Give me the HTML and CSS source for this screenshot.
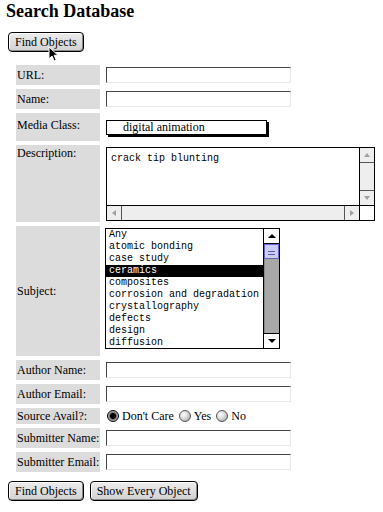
FILE: index.html
```html
<!DOCTYPE html>
<html lang="en">
<head>
    <meta charset="UTF-8">
    <title>Search Database</title>
    <link rel="stylesheet" href="styles.css">
</head>
<body>

    <h1 class="title">Search Database</h1>

    <form class="search">
        <div class="top-actions">
            <button type="submit" class="btn">Find Objects</button>
        </div>

        <div class="fields">
            <div class="label">URL:</div>
            <div class="value"><input type="text" class="text-input"></div>

            <div class="label">Name:</div>
            <div class="value"><input type="text" class="text-input"></div>

            <div class="label label-media">Media Class:</div>
            <div class="value value-top">
                <div class="popup">digital animation</div>
            </div>

            <div class="label label-top">Description:</div>
            <div class="value value-top">
                <!-- fake textarea with classic scrollbars -->
                <div class="textbox">
                    <div class="textbox-text">crack tip blunting</div>
                    <div class="vscroll">
                        <div class="sb-btn sb-up"></div>
                        <div class="sb-track"></div>
                        <div class="sb-btn sb-down"></div>
                    </div>
                    <div class="hscroll">
                        <div class="sb-btn sb-left"></div>
                        <div class="sb-track"></div>
                        <div class="sb-btn sb-right"></div>
                    </div>
                    <div class="corner"></div>
                </div>
            </div>

            <div class="label">Subject:</div>
            <div class="value value-top">
                <div class="listbox">
                    <ul class="list-items">
                        <li>Any</li>
                        <li>atomic bonding</li>
                        <li>case study</li>
                        <li class="selected">ceramics</li>
                        <li>composites</li>
                        <li>corrosion and degradation</li>
                        <li>crystallography</li>
                        <li>defects</li>
                        <li>design</li>
                        <li>diffusion</li>
                    </ul>
                    <div class="list-scroll">
                        <div class="ls-btn ls-up"></div>
                        <div class="ls-thumb"></div>
                        <div class="ls-track"></div>
                        <div class="ls-btn ls-down"></div>
                    </div>
                </div>
            </div>

            <div class="label">Author Name:</div>
            <div class="value"><input type="text" class="text-input"></div>

            <div class="label">Author Email:</div>
            <div class="value"><input type="text" class="text-input"></div>

            <div class="label">Source Avail?:</div>
            <div class="value radios">
                <label class="radio-opt"><span class="radio checked"></span>Don't Care</label>
                <label class="radio-opt"><span class="radio"></span>Yes</label>
                <label class="radio-opt"><span class="radio"></span>No</label>
            </div>

            <div class="label">Submitter Name:</div>
            <div class="value"><input type="text" class="text-input"></div>

            <div class="label">Submitter Email:</div>
            <div class="value"><input type="text" class="text-input"></div>
        </div>

        <div class="actions">
            <button type="submit" class="btn">Find Objects</button>
            <button type="button" class="btn">Show Every Object</button>
        </div>
    </form>

    <!-- mouse pointer over the top button -->
    <svg class="cursor" width="12" height="17" viewBox="0 0 12 17">
        <path d="M1 1 L1 13 L4 10 L6.3 15 L8.3 14.2 L6.1 9.3 L10 9.3 Z" fill="#000" stroke="#fff" stroke-width="1"/>
    </svg>

</body>
</html>
```

FILE: styles.css
```css
/* Base */
body {
    margin: 0;
    padding: 1px 0 0;
    font-family: "Liberation Serif", "Times New Roman", serif;
    font-size: 12px;
    color: #000;
    background: #fff;
    position: relative;
}

.title {
    margin: 0 0 0 6px;
    font-size: 18px;
    line-height: 20px;
    font-weight: bold;
}

/* Buttons */
.top-actions {
    margin: 11px 0 0 8px;
}

.btn {
    height: 20px;
    padding: 0 6px;
    font-family: inherit;
    font-size: 12px;
    color: #000;
    border: 1px solid #000;
    border-radius: 4px;
    background: linear-gradient(#ececec, #d2d2d2);
    box-shadow: inset 1px 1px 0 #fff, inset -1px -1px 0 #8a8a8a;
}

.actions {
    display: flex;
    gap: 6px;
    margin: 9px 0 0 8px;
}

/* Form grid */
.fields {
    display: grid;
    grid-template-columns: 84px auto;
    grid-template-rows: 20px 20px 28px 77px 130px 20px 20px 16px 20px 20px;
    column-gap: 6px;
    row-gap: 4px;
    margin: 13px 0 0 16px;
}

.label {
    display: flex;
    align-items: center;
    padding-left: 1px;
    background: #dcdcdc;
    line-height: 14px;
}

.label-top {
    align-items: flex-start;
    padding-top: 1px;
}

.label-media {
    align-items: flex-start;
    padding-top: 5px;
}

.value {
    display: flex;
    align-items: center;
}

.value-top {
    align-items: flex-start;
}

.text-input {
    width: 185px;
    height: 16px;
    box-sizing: border-box;
    margin: 0;
    padding: 0 2px;
    border: 1px solid;
    border-color: #444 #e8e8e8 #e8e8e8 #444;
    background: #fff;
    font: 12px "Liberation Serif", serif;
    outline: none;
}

/* Media class popup */
.popup {
    width: 161px;
    height: 15px;
    box-sizing: border-box;
    margin-top: 7px;
    padding-left: 16px;
    border: 1px solid #000;
    box-shadow: 2px 2px 0 #000;
    background: #fff;
    line-height: 13px;
}

/* Description box */
.textbox {
    width: 269px;
    height: 74px;
    box-sizing: border-box;
    margin-top: 2px;
    border: 1px solid #000;
    display: grid;
    grid-template-columns: 1fr 15px;
    grid-template-rows: 1fr 15px;
    background: #fff;
}

.textbox-text {
    padding: 5px 4px;
    font: 10px/12px "Liberation Mono", "Courier New", monospace;
}

.vscroll {
    display: flex;
    flex-direction: column;
    border-left: 1px solid #000;
    background: #eee;
}

.hscroll {
    display: flex;
    border-top: 1px solid #000;
    background: #eee;
}

.vscroll .sb-track,
.hscroll .sb-track {
    flex: 1;
}

.corner {
    border-left: 1px solid #000;
    border-top: 1px solid #000;
    background: #fff;
}

.sb-btn {
    display: flex;
    align-items: center;
    justify-content: center;
    flex: none;
}

.sb-up,
.sb-down {
    height: 14px;
}

.sb-up {
    border-bottom: 1px solid #555;
}

.sb-down {
    border-top: 1px solid #555;
}

.sb-left,
.sb-right {
    width: 14px;
}

.sb-left {
    border-right: 1px solid #555;
}

.sb-right {
    border-left: 1px solid #555;
}

.sb-btn::before {
    content: "";
    border: 3.5px solid transparent;
}

.sb-up::before {
    border-top: 0;
    border-bottom: 4px solid #a0a0a0;
}

.sb-down::before {
    border-bottom: 0;
    border-top: 4px solid #a0a0a0;
}

.sb-left::before {
    border-left: 0;
    border-right: 4px solid #a0a0a0;
}

.sb-right::before {
    border-right: 0;
    border-left: 4px solid #a0a0a0;
}

/* Subject list */
.listbox {
    width: 175px;
    height: 121px;
    box-sizing: border-box;
    margin: 2px 0 0 -1px;
    border: 1px solid #000;
    display: flex;
    background: #fff;
    overflow: hidden;
}

.list-items {
    flex: 1;
    margin: 0;
    padding: 0;
    list-style: none;
    font: 10px/12px "Liberation Mono", "Courier New", monospace;
    white-space: nowrap;
}

.list-items li {
    padding-left: 3px;
}

.list-items .selected {
    background: #000;
    color: #fff;
}

.list-scroll {
    width: 15px;
    flex: none;
    display: flex;
    flex-direction: column;
    border-left: 1px solid #000;
    background: #fff;
}

.ls-btn {
    height: 14px;
    display: flex;
    align-items: center;
    justify-content: center;
}

.ls-up {
    border-bottom: 1px solid #000;
}

.ls-down {
    border-top: 1px solid #000;
}

.ls-btn::before {
    content: "";
    border: 4px solid transparent;
}

.ls-up::before {
    border-top: 0;
    border-bottom: 4px solid #000;
}

.ls-down::before {
    border-bottom: 0;
    border-top: 4px solid #000;
}

.ls-thumb {
    height: 15px;
    box-sizing: border-box;
    border: 1px solid #6666cc;
    background: repeating-linear-gradient(#ccccff 0 2px, #5555bb 2px 3px) 3px 4px / 7px 7px no-repeat, #ccccff;
}

.ls-track {
    flex: 1;
    background: #a8a8a8;
    border-left: 1px solid #888;
}

/* Radios */
.radios {
    padding-left: 1px;
    gap: 5px;
}

.radio-opt {
    display: flex;
    align-items: center;
    gap: 3px;
}

.radio {
    width: 12px;
    height: 12px;
    box-sizing: border-box;
    border-radius: 50%;
    border: 1px solid #555;
    background: radial-gradient(circle at 35% 35%, #fff 0, #ddd 40%, #999 100%);
}

.radio.checked {
    border-color: #000;
    background: radial-gradient(circle, #000 0 2.6px, #666 3.2px, #bbb 5px);
}

/* Pointer */
.cursor {
    position: absolute;
    left: 48px;
    top: 46px;
}
```
